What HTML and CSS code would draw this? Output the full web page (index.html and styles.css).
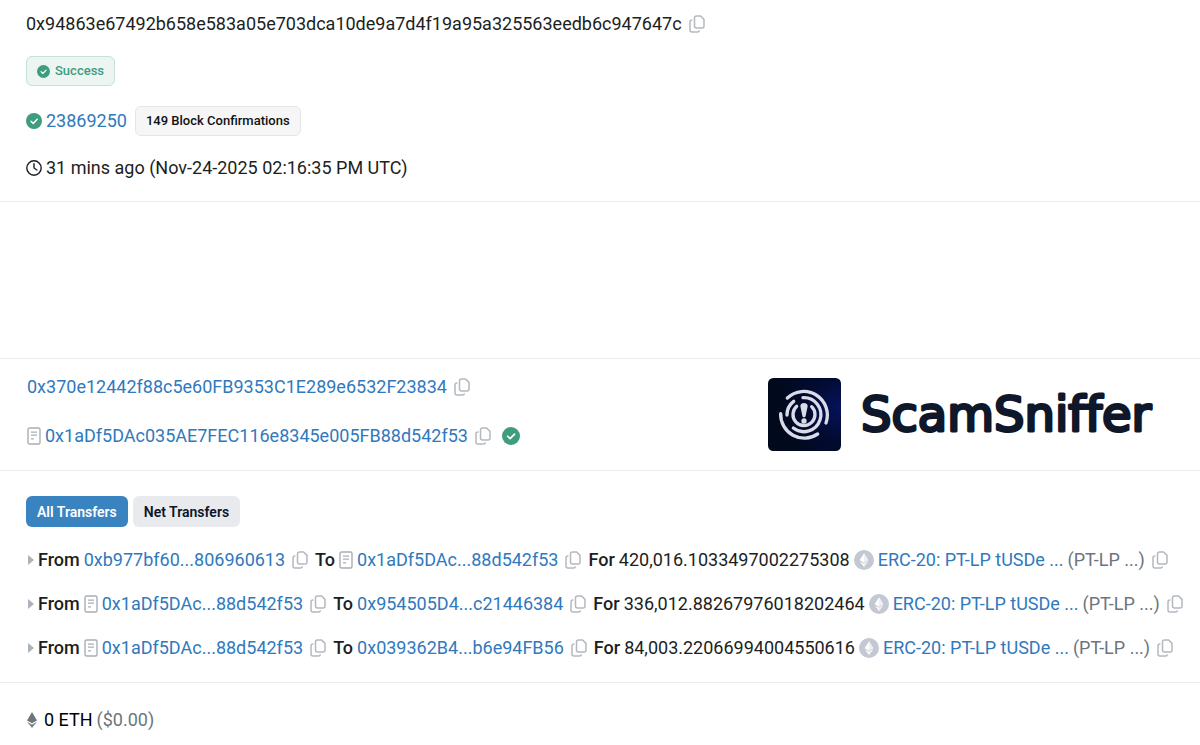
FILE: index.html
```
<!DOCTYPE html>
<html lang="en">
<head>
    <meta charset="UTF-8">
    <meta name="viewport" content="width=device-width, initial-scale=1.0">
    <title>Transaction Details</title>
    <link rel="stylesheet" href="styles.css">
</head>
<body>

    <!-- Shared icons -->
    <svg class="sprite" aria-hidden="true">
        <symbol id="copy" viewBox="0 0 16 18">
            <path d="M7.500 1h4.100L15 4.400V11a2 2 0 0 1-2 2H7.500a2 2 0 0 1-2-2V3a2 2 0 0 1 2-2z" fill="none" stroke="currentColor" stroke-width="1.500" stroke-linejoin="round"/>
            <path d="M3.400 5H3a2 2 0 0 0-2 2v8a2 2 0 0 0 2 2h5.500a2 2 0 0 0 2-1.600" fill="none" stroke="currentColor" stroke-width="1.500"/>
        </symbol>
        <symbol id="doc" viewBox="0 0 14 18">
            <rect x="1" y="1" width="12" height="16" rx="1.500" fill="none" stroke="currentColor" stroke-width="1.400"/>
            <path d="M4 5.200h6M4 8.200h6M4 11.800h3" stroke="currentColor" stroke-width="1.300"/>
        </symbol>
        <symbol id="check" viewBox="0 0 16 16">
            <circle cx="8" cy="8" r="8" fill="currentColor"/>
            <path d="M5 8.200l2.200 2.200L11.200 6.300" fill="none" stroke="#fff" stroke-width="1.500" stroke-linecap="round" stroke-linejoin="round"/>
        </symbol>
        <symbol id="clock" viewBox="0 0 16 16">
            <circle cx="8" cy="8" r="7.200" fill="none" stroke="currentColor" stroke-width="1.400"/>
            <path d="M8 3.800V8l2.900 2" fill="none" stroke="currentColor" stroke-width="1.400" stroke-linecap="round"/>
        </symbol>
        <symbol id="token" viewBox="0 0 20 20">
            <circle cx="10" cy="10" r="10" fill="#c4c8d3"/>
            <path d="M10 3.300l4.300 7L10 12.700 5.700 10.300z" fill="#fff"/>
            <path d="M5.900 11.500L10 13.800l4.100-2.300L10 17z" fill="#fff"/>
            <path d="M10 3.300l4.300 7L10 12.700zM10 13.800l4.100-2.300L10 17z" fill="#eeeff3"/>
        </symbol>
        <symbol id="eth" viewBox="0 0 12 18">
            <path d="M6 1l5 8.400-5 2.800-5-2.800z" fill="#6c757d"/>
            <path d="M1 10.800l5 2.800 5-2.800L6 17z" fill="#7d858d"/>
        </symbol>
    </svg>

    <main>
        <section class="section overview">
            <div class="line">
                <span>0x94863e67492b658e583a05e703dca10de9a7d4f19a95a325563eedb6c947647c</span>
                <button class="copy" aria-label="Copy transaction hash"><svg><use href="#copy"/></svg></button>
            </div>
            <div class="line">
                <span class="badge badge-success"><svg class="check-sm"><use href="#check"/></svg>Success</span>
            </div>
            <div class="line">
                <svg class="check"><use href="#check"/></svg>
                <a href="#">23869250</a>
                <span class="badge badge-block">149 Block Confirmations</span>
            </div>
            <div class="line">
                <svg class="clock"><use href="#clock"/></svg>
                <span>31 mins ago (Nov-24-2025 02:16:35 PM UTC)</span>
            </div>
        </section>

        <section class="section blank"></section>

        <section class="section parties">
            <div class="addresses">
                <div class="line">
                    <a href="#">0x370e12442f88c5e60FB9353C1E289e6532F23834</a>
                    <button class="copy" aria-label="Copy sender address"><svg><use href="#copy"/></svg></button>
                </div>
                <div class="line">
                    <svg class="doc"><use href="#doc"/></svg>
                    <a href="#">0x1aDf5DAc035AE7FEC116e8345e005FB88d542f53</a>
                    <button class="copy" aria-label="Copy contract address"><svg><use href="#copy"/></svg></button>
                    <svg class="check-lg"><use href="#check"/></svg>
                </div>
            </div>
            <div class="brand">
                <svg class="brand-logo" viewBox="0 0 219 219">
                    <defs>
                        <radialGradient id="glow" cx="1" cy="0.4" r="0.9">
                            <stop offset="0" stop-color="#04135c"/>
                            <stop offset="0.5" stop-color="#020b30"/>
                            <stop offset="1" stop-color="#01091c"/>
                        </radialGradient>
                    </defs>
                    <rect width="219" height="219" rx="16" fill="url(#glow)"/>
                    <g fill="none" stroke="#d9dbe9" stroke-width="10" stroke-linecap="round">
                        <path d="M58 60A71 71 0 0 1 174 135"/>
                        <path d="M38 107A71 71 0 0 0 149 168"/>
                        <path d="M105 59A51 51 0 1 1 76 150"/>
                        <path d="M57 111A51 51 0 0 1 77 70"/>
                        <path d="M86 85A33 33 0 1 0 131 86"/>
                    </g>
                    <path d="M97 85c0-13 22-13 22 0l-6 28c-1 6-9 6-10 0z" fill="#d9dbe9"/>
                    <circle cx="108" cy="129" r="8" fill="#d9dbe9"/>
                </svg>
                <svg class="brand-name" viewBox="0 0 292 60">
                    <text x="0" y="46">ScamSniffer</text>
                </svg>
            </div>
        </section>

        <section class="section transfers">
            <div class="tabs">
                <button class="tab active">All Transfers</button>
                <button class="tab">Net Transfers</button>
            </div>
            <ul class="transfer-list">
                <li class="line">
                    <span class="caret"></span>
                    <b>From</b>
                    <a href="#">0xb977bf60...806960613</a>
                    <button class="copy" aria-label="Copy address"><svg><use href="#copy"/></svg></button>
                    <b>To</b>
                    <svg class="doc"><use href="#doc"/></svg>
                    <a href="#">0x1aDf5DAc...88d542f53</a>
                    <button class="copy" aria-label="Copy address"><svg><use href="#copy"/></svg></button>
                    <b>For</b>
                    <span>420,016.1033497002275308</span>
                    <svg class="token"><use href="#token"/></svg>
                    <a href="#">ERC-20: PT-LP tUSDe ...</a>
                    <span class="muted">(PT-LP ...)</span>
                    <button class="copy" aria-label="Copy token address"><svg><use href="#copy"/></svg></button>
                </li>
                <li class="line">
                    <span class="caret"></span>
                    <b>From</b>
                    <svg class="doc"><use href="#doc"/></svg>
                    <a href="#">0x1aDf5DAc...88d542f53</a>
                    <button class="copy" aria-label="Copy address"><svg><use href="#copy"/></svg></button>
                    <b>To</b>
                    <a href="#">0x954505D4...c21446384</a>
                    <button class="copy" aria-label="Copy address"><svg><use href="#copy"/></svg></button>
                    <b>For</b>
                    <span>336,012.88267976018202464</span>
                    <svg class="token"><use href="#token"/></svg>
                    <a href="#">ERC-20: PT-LP tUSDe ...</a>
                    <span class="muted">(PT-LP ...)</span>
                    <button class="copy" aria-label="Copy token address"><svg><use href="#copy"/></svg></button>
                </li>
                <li class="line">
                    <span class="caret"></span>
                    <b>From</b>
                    <svg class="doc"><use href="#doc"/></svg>
                    <a href="#">0x1aDf5DAc...88d542f53</a>
                    <button class="copy" aria-label="Copy address"><svg><use href="#copy"/></svg></button>
                    <b>To</b>
                    <a href="#">0x039362B4...b6e94FB56</a>
                    <button class="copy" aria-label="Copy address"><svg><use href="#copy"/></svg></button>
                    <b>For</b>
                    <span>84,003.22066994004550616</span>
                    <svg class="token"><use href="#token"/></svg>
                    <a href="#">ERC-20: PT-LP tUSDe ...</a>
                    <span class="muted">(PT-LP ...)</span>
                    <button class="copy" aria-label="Copy token address"><svg><use href="#copy"/></svg></button>
                </li>
            </ul>
        </section>

        <section class="value">
            <div class="line">
                <svg class="eth"><use href="#eth"/></svg>
                <span class="amount">0 ETH</span>
                <span class="muted">($0.00)</span>
            </div>
        </section>
    </main>

</body>
</html>
```
FILE: styles.css
```
* {
    box-sizing: border-box;
}
body {
    margin: 0;
    background-color: #fff;
    color: #1b1e22;
    font-family: Roboto, Arial, sans-serif;
    font-size: 18px;
    line-height: 24px;
}
a {
    color: #3079bd;
    text-decoration: none;
}
a:hover {
    color: #1c5a94;
}
b {
    font-weight: 500;
}
button {
    font-family: inherit;
    border: none;
    cursor: pointer;
}
svg {
    display: block;
    flex: none;
}
.sprite {
    position: absolute;
    width: 0;
    height: 0;
}
.section {
    border-bottom: 1px solid #e9ecef;
}
.line {
    display: flex;
    align-items: center;
    gap: 4px;
    white-space: nowrap;
}
.muted {
    color: #6c757d;
}

/* Icons */
.copy {
    padding: 0;
    margin: 0 3px;
    background: none;
    color: #b4b9c0;
}
.copy svg {
    width: 16px;
    height: 18px;
}
.doc {
    width: 14px;
    height: 18px;
    color: #a9afb7;
}
.check, .clock {
    width: 16px;
    height: 16px;
}
.check, .check-sm, .check-lg {
    color: #3f9c7e;
}
.check-sm {
    width: 13px;
    height: 13px;
}
.check-lg {
    width: 18px;
    height: 18px;
    margin-left: 4px;
}

/* Overview */
.overview {
    display: flex;
    flex-direction: column;
    gap: 20px;
    padding: 12px 26px 21px;
}
.badge {
    display: inline-flex;
    align-items: center;
    gap: 5px;
    height: 30px;
    padding: 0 10px;
    border: 1px solid;
    border-radius: 6px;
    font-size: 13px;
    font-weight: 500;
}
.badge-success {
    background-color: #ecf5f2;
    border-color: #c5e1d8;
    color: #3f9c7e;
}
.badge-block {
    margin-left: 4px;
    background-color: #f6f6f7;
    border-color: #e4e6e8;
    color: #111;
}
.blank {
    min-height: 157px;
}

/* From / to addresses and brand */
.parties {
    display: flex;
    justify-content: space-between;
    padding: 16px 47px 19px 27px;
}
.addresses {
    display: flex;
    flex-direction: column;
    gap: 25px;
}
.brand {
    display: flex;
    align-items: center;
    gap: 20px;
    margin-top: 3px;
}
.brand-logo {
    width: 73px;
    height: 73px;
}
.brand-name {
    width: 292px;
    height: 60px;
    overflow: visible;
    fill: #0f172a;
    stroke: #0f172a;
    stroke-width: 3px;
    stroke-linejoin: round;
    font-family: "DejaVu Sans", sans-serif;
    font-size: 48px;
    font-variant-ligatures: none;
}

/* Transfers */
.transfers {
    padding: 25px 26px 22px;
}
.tabs {
    display: flex;
    gap: 5px;
}
.tab {
    height: 31px;
    padding: 0 11px;
    border-radius: 6px;
    background-color: #e9eaee;
    color: #0b1526;
    font-size: 14px;
    font-weight: 600;
}
.tab.active {
    background-color: #3a83c1;
    color: #fff;
}
.transfer-list {
    display: flex;
    flex-direction: column;
    gap: 20px;
    margin: 21px 0 0;
    padding: 0;
    list-style: none;
}
.caret {
    margin-left: 2px;
    border-left: 6px solid #adb3bb;
    border-top: 5px solid transparent;
    border-bottom: 5px solid transparent;
}
.token {
    width: 20px;
    height: 20px;
}

/* Value */
.value {
    padding: 25px 26px;
}
.eth {
    width: 12px;
    height: 18px;
}
.amount {
    margin-left: 2px;
    color: #000;
}
```
